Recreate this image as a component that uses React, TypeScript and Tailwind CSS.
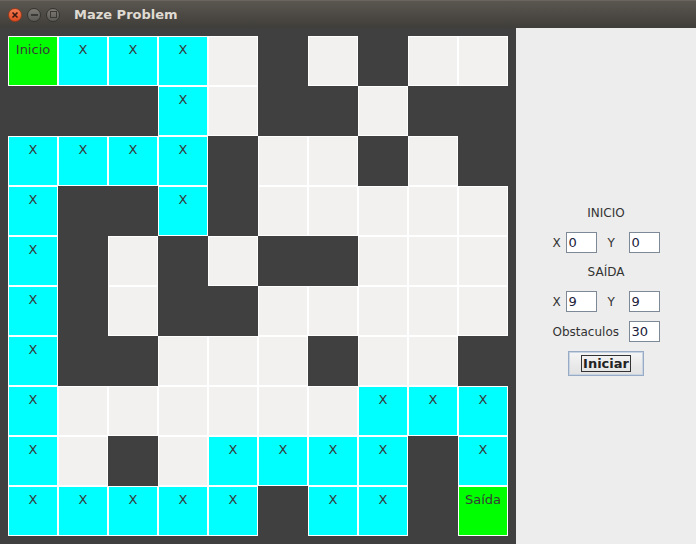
const W = 'w';
const L = 'l';
const C = 'c';
const S = 's';
const E = 'e';

// 10x10 maze, row by row
const maze: string[][] = [
  [S, C, C, C, L, W, L, W, L, L],
  [W, W, W, C, L, W, W, L, W, W],
  [C, C, C, C, W, L, L, W, L, W],
  [C, W, W, C, W, L, L, L, L, L],
  [C, W, L, W, L, W, W, L, L, L],
  [C, W, L, W, W, L, L, L, L, L],
  [C, W, W, L, L, L, W, L, L, W],
  [C, L, L, L, L, L, L, C, C, C],
  [C, L, W, L, C, C, C, C, W, C],
  [C, C, C, C, C, W, C, C, W, E],
];

function Cell({ kind }: { kind: string }) {
  if (kind === W) return <div className="h-[50px] bg-[#404040]" />;
  const bg =
    kind === C ? 'bg-[#00ffff]' : kind === S || kind === E ? 'bg-[#00ff00]' : 'bg-[#f2f1f0]';
  const label = kind === C ? 'X' : kind === S ? 'Inicio' : kind === E ? 'Saída' : '';
  return (
    <div className={`h-[50px] border border-white ${bg} pt-[5px] text-center text-[13px] leading-[15px] text-[#3a3a3a]`}>
      {label}
    </div>
  );
}

function Field({ value }: { value: string }) {
  return (
    <div className="w-[31px] h-[21px] border border-[#7d8996] bg-white pl-[2px] text-[13px] leading-[19px] text-[#20203a]">
      {value}
    </div>
  );
}

function CoordRow({ x, y }: { x: string; y: string }) {
  return (
    <div className="flex items-center h-[21px]">
      <span className="w-[7px] text-center">X</span>
      <div className="ml-[6px]">
        <Field value={x} />
      </div>
      <span className="ml-[11px] w-[7px] text-center">Y</span>
      <div className="ml-[14px]">
        <Field value={y} />
      </div>
    </div>
  );
}

export default function App() {
  return (
    <div className="w-[696px] h-[544px] flex flex-col bg-[#3c3b37] font-['DejaVu_Sans',sans-serif] overflow-hidden">
      {/* title bar */}
      <div className="h-[28px] flex items-center bg-gradient-to-b from-[#5a5650] to-[#403e3a] border-t border-[#6a665f]">
        <div className="ml-[8px] w-[14px] h-[14px] rounded-full bg-gradient-to-b from-[#f57a52] to-[#df4b1f] border border-[#9c3a1a] flex items-center justify-center">
          <svg width="8" height="8" viewBox="0 0 8 8">
            <path d="M1.5 1.5 L6.5 6.5 M6.5 1.5 L1.5 6.5" stroke="#3a1a10" strokeWidth="1.6" />
          </svg>
        </div>
        <div className="ml-[5px] w-[14px] h-[14px] rounded-full bg-gradient-to-b from-[#7d7a74] to-[#5c5a55] border border-[#35342f] flex items-center justify-center">
          <div className="w-[7px] h-[2px] bg-[#3a3935]" />
        </div>
        <div className="ml-[5px] w-[14px] h-[14px] rounded-full bg-gradient-to-b from-[#7d7a74] to-[#5c5a55] border border-[#35342f] flex items-center justify-center">
          <div className="w-[7px] h-[7px] border-[1.5px] border-[#3a3935]" />
        </div>
        <span className="ml-[14px] text-[13px] font-bold text-[#dfdbd2]">Maze Problem</span>
      </div>

      <div className="flex flex-1">
        {/* maze */}
        <div className="w-[516px] bg-[#404040] p-[8px]">
          <div className="grid grid-cols-10 w-[500px]">
            {maze.flatMap((row, r) => row.map((k, c) => <Cell key={`${r}-${c}`} kind={k} />))}
          </div>
        </div>

        {/* controls */}
        <div className="flex-1 bg-[#ededed] flex flex-col items-center pt-[177px] text-[12px] text-[#333]">
          <div className="h-[16px] leading-[16px]">INICIO</div>
          <div className="mt-[11px]">
            <CoordRow x="0" y="0" />
          </div>
          <div className="mt-[11px] h-[16px] leading-[16px]">SAÍDA</div>
          <div className="mt-[11px]">
            <CoordRow x="9" y="9" />
          </div>
          <div className="mt-[9px] flex items-center h-[21px]">
            <span className="w-[69px]">Obstaculos</span>
            <div className="ml-[7px]">
              <Field value="30" />
            </div>
          </div>
          <div className="mt-[9px] w-[76px] h-[25px] border border-[#98abc4] p-[1px] bg-[#c8d4e3]">
            <div className="h-full bg-gradient-to-b from-[#f4f4f4] to-[#e2e2e2] flex items-center justify-center">
              <span className="border border-[#333] px-[1px] text-[13px] leading-[15px] font-bold text-[#222]">Iniciar</span>
            </div>
          </div>
        </div>
      </div>
    </div>
  );
}
